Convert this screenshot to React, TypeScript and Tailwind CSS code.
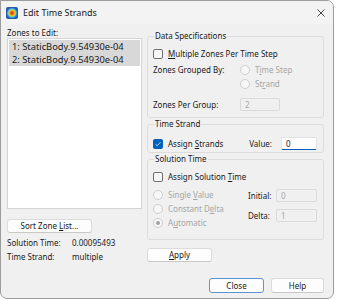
import React from 'react';

const font = { fontFamily: '"Noto Sans", "Segoe UI", sans-serif' };

const Checkbox = ({ checked = false }: { checked?: boolean }) =>
  checked ? (
    <span className="flex h-[10px] w-[10px] shrink-0 items-center justify-center rounded-[2px] bg-[#005fb8]">
      <svg width="8" height="8" viewBox="0 0 8 8">
        <path d="M1.5 4.2 L3.2 5.8 L6.5 2.2" fill="none" stroke="#cfe3f7" strokeWidth="0.9" />
      </svg>
    </span>
  ) : (
    <span className="h-[10px] w-[10px] shrink-0 rounded-[2px] border border-[#6e6e6e] bg-[#f6f6f6]" />
  );

const Radio = ({ selected = false }: { selected?: boolean }) => (
  <span className="flex h-[10px] w-[10px] shrink-0 items-center justify-center rounded-full border border-[#cfcfcf] bg-[#f7f7f7]">
    {selected && <span className="h-[4px] w-[4px] rounded-full bg-[#a3a3a3]" />}
  </span>
);

const Field = ({ value, active = false, className = '' }: { value: string; active?: boolean; className?: string }) => (
  <div
    className={`flex h-[13px] items-center rounded-[2px] border px-[4px] text-[8px] ${
      active
        ? 'border-[#e2e2e2] border-b-[#005fb8] bg-white text-[#1a1a1a]'
        : 'border-[#dadada] bg-[#f0f0f0] text-[#a6a6a6]'
    } ${className}`}
  >
    {value}
  </div>
);

const Group = ({ title, children, className = '' }: { title: string; children: React.ReactNode; className?: string }) => (
  <fieldset className={`rounded-[3px] border border-[#dcdcdc] px-[5px] ${className}`}>
    <legend className="ml-[1px] px-[1px] text-[8px] leading-[10px] text-[#1a1a1a]">{title}</legend>
    {children}
  </fieldset>
);

const Button = ({ children, primary = false, className = '' }: { children: React.ReactNode; primary?: boolean; className?: string }) => (
  <div
    className={`flex h-[14px] items-center justify-center rounded-[3px] border bg-[#fdfdfd] text-[8px] text-[#1a1a1a] ${
      primary ? 'border-[#5a93d0]' : 'border-[#dcdcdc] border-b-[#c8c8c8]'
    } ${className}`}
  >
    <span>{children}</span>
  </div>
);

const AppIcon = () => (
  <svg width="12" height="12" viewBox="0 0 12 12">
    <defs>
      <radialGradient id="heat" cx="50%" cy="50%" r="50%">
        <stop offset="0%" stopColor="#e0201c" />
        <stop offset="35%" stopColor="#f07a1a" />
        <stop offset="55%" stopColor="#f3d41d" />
        <stop offset="75%" stopColor="#3fc1e8" />
        <stop offset="100%" stopColor="#1d5fc7" />
      </radialGradient>
    </defs>
    <rect x="0.5" y="0.5" width="11" height="11" rx="1" fill="url(#heat)" stroke="#2a5aa8" strokeWidth="1" />
  </svg>
);

export default function App() {
  return (
    <div className="h-[300px] w-[337px] bg-white" style={font}>
      <div className="flex h-[299px] w-[334px] flex-col overflow-hidden rounded-tr-[7px] rounded-b-[7px] border border-[#9c9c9c] bg-[#f0f0f0] text-[#1a1a1a]">
        {/* title bar */}
        <div className="flex h-[23px] shrink-0 items-center bg-[#f3f3f3] pl-[5px] pr-[8px]">
          <AppIcon />
          <span className="ml-[5px] text-[9px]">Edit Time Strands</span>
          <svg className="ml-auto" width="8" height="8" viewBox="0 0 8 8">
            <path d="M0.5 0.5 L7.5 7.5 M7.5 0.5 L0.5 7.5" stroke="#333" strokeWidth="0.9" />
          </svg>
        </div>

        <div className="flex gap-[5px] px-[6px] text-[8px]">
          {/* left column */}
          <div className="flex w-[135px] flex-col">
            <div className="mt-[3px] leading-[11px]">Zones to Edit:</div>
            <div className="h-[171px] border border-[#d4d4d4] bg-white p-[1px] text-[9.3px]">
              <div className="bg-[#d8d8d8] pl-[3px] leading-[13px]">1: StaticBody.9.54930e-04</div>
              <div className="bg-[#d8d8d8] pl-[3px] leading-[13px]">2: StaticBody.9.54930e-04</div>
            </div>
            <Button className="mt-[10px] w-[85px]">
              Sort Zone <span className="underline">L</span>ist...
            </Button>
            <div className="mt-[3px] flex leading-[14px]">
              <span className="w-[65px]">Solution Time:</span>
              <span>0.00095493</span>
            </div>
            <div className="flex leading-[14px]">
              <span className="w-[65px]">Time Strand:</span>
              <span>multiple</span>
            </div>
          </div>

          {/* right column */}
          <div className="flex w-[177px] flex-col pt-[7px]">
            <Group title="Data Specifications" className="h-[87px]">
              <div className="mt-[7px] flex h-[12px] items-center gap-[5px]">
                <Checkbox />
                <span>
                  <span className="underline">M</span>ultiple Zones Per Time Step
                </span>
              </div>
              <div className="mt-[4px] flex">
                <span className="w-[87px] leading-[12px]">Zones Grouped By:</span>
                <div className="flex flex-col gap-[2px] text-[#a6a6a6]">
                  <div className="flex h-[12px] items-center gap-[5px]">
                    <Radio />
                    <span>
                      T<span className="underline">i</span>me Step
                    </span>
                  </div>
                  <div className="flex h-[12px] items-center gap-[5px]">
                    <Radio />
                    <span>
                      St<span className="underline">r</span>and
                    </span>
                  </div>
                </div>
              </div>
              <div className="mt-[8px] flex items-center">
                <span className="w-[87px] leading-[12px]">Zones Per Group:</span>
                <Field value="2" className="w-[40px]" />
              </div>
            </Group>

            <Group title="Time Strand" className="mt-[1px] h-[34px]">
              <div className="mt-[8px] flex items-center">
                <div className="flex items-center gap-[5px]">
                  <Checkbox checked />
                  <span>
                    Assign <span className="underline">S</span>trands
                  </span>
                </div>
                <span className="ml-auto mr-[9px]">Value:</span>
                <Field value="0" active className="mr-[1px] w-[36px]" />
              </div>
            </Group>

            <Group title="Solution Time" className="mt-[1px] h-[86px]">
              <div className="mt-[7px] flex h-[12px] items-center gap-[5px]">
                <Checkbox />
                <span>
                  Assign Solution <span className="underline">T</span>ime
                </span>
              </div>
              <div className="mt-[6px] flex">
                <div className="flex flex-col gap-[2px] text-[#a6a6a6]">
                  <div className="flex h-[12px] items-center gap-[5px]">
                    <Radio />
                    <span>
                      Single <span className="underline">V</span>alue
                    </span>
                  </div>
                  <div className="flex h-[12px] items-center gap-[5px]">
                    <Radio />
                    <span>
                      Constant D<span className="underline">e</span>lta
                    </span>
                  </div>
                  <div className="flex h-[12px] items-center gap-[5px]">
                    <Radio selected />
                    <span>
                      A<span className="underline">u</span>tomatic
                    </span>
                  </div>
                </div>
                <div className="ml-auto mr-[1px] flex flex-col gap-[7px]">
                  <div className="flex items-center">
                    <span className="w-[28px]">Initial:</span>
                    <Field value="0" className="w-[41px]" />
                  </div>
                  <div className="flex items-center">
                    <span className="w-[28px]">Delta:</span>
                    <Field value="1" className="w-[41px]" />
                  </div>
                </div>
              </div>
            </Group>

            <Button className="mt-[8px] w-[65px]">
              <span className="underline">A</span>pply
            </Button>

            <div className="mt-[16px] flex justify-end gap-[7px]">
              <Button primary className="h-[15px] w-[55px]">
                Close
              </Button>
              <Button className="h-[15px] w-[53px]">Help</Button>
            </div>
          </div>
        </div>
      </div>
    </div>
  );
}
